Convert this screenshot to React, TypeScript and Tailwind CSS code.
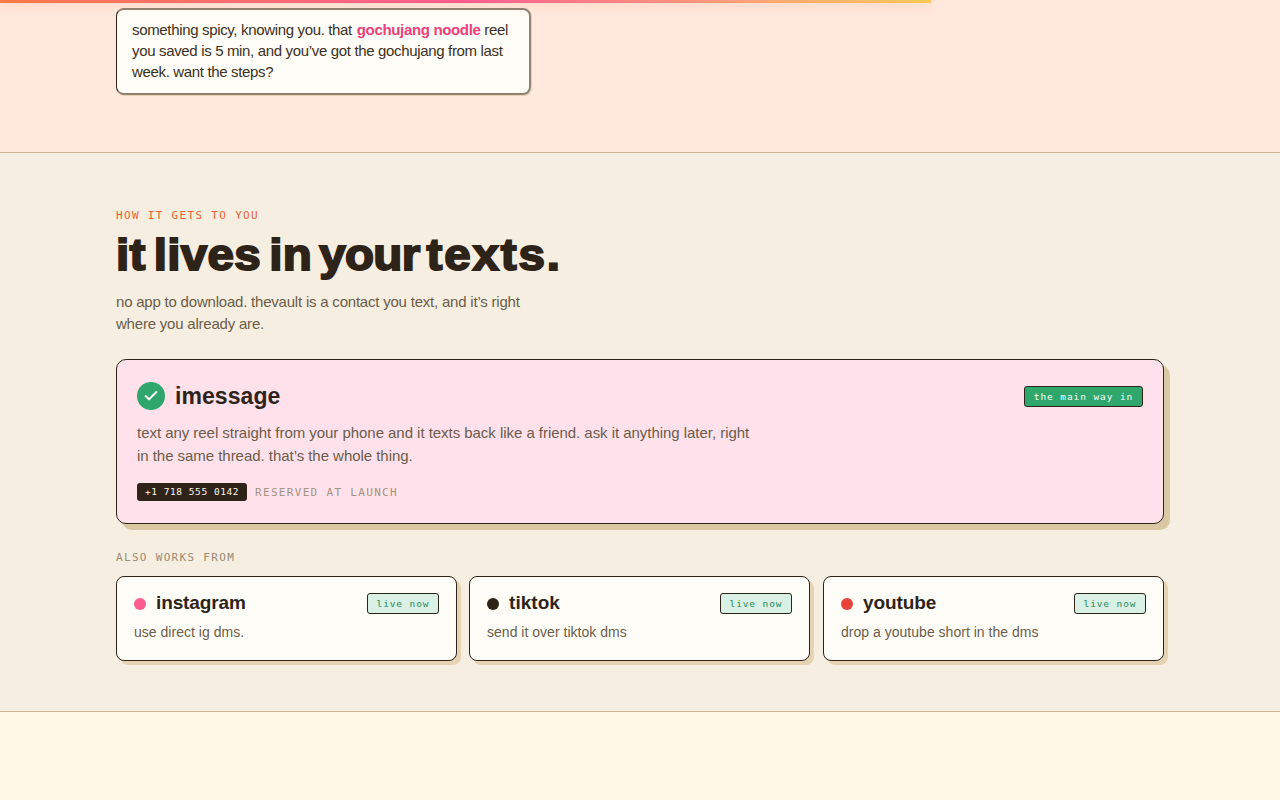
import { Check } from "lucide-react";

type Source = {
  name: string;
  note: string;
  dot: string;
  nameSpacing: string;
};

const SOURCES: Source[] = [
  {
    name: "instagram",
    note: "use direct ig dms.",
    dot: "bg-[#ff5c8f]",
    nameSpacing: "tracking-[-0.12px]",
  },
  {
    name: "tiktok",
    note: "send it over tiktok dms",
    dot: "bg-[#2e2318]",
    nameSpacing: "tracking-[0.05px]",
  },
  {
    name: "youtube",
    note: "drop a youtube short in the dms",
    dot: "bg-[#e8433a]",
    nameSpacing: "tracking-[-0.1px]",
  },
];

function SourceCard({ source }: { source: Source }) {
  return (
    <div className="h-[85px] w-[341px] rounded-lg border border-[#2e2318] bg-[#fffdf7] px-[17px] pt-4 shadow-[4px_4px_0_#e5d3b3]">
      <div className="flex h-[21px] items-center">
        <span className={`mr-2.5 mt-px h-3 w-3 rounded-full ${source.dot}`} />
        <h3 className={`-mt-0.5 text-[19px] font-bold leading-[21px] text-[#2e2318] ${source.nameSpacing}`}>
          {source.name}
        </h3>
        <span className="ml-auto flex h-[21px] w-[72px] items-center justify-center rounded-[3px] border border-[#2e2318] bg-[#d9f0e4] pt-px font-['DejaVu_Sans_Mono',monospace] text-[9.5px] tracking-[0.9px] text-[#2a8a5c]">
          live now
        </span>
      </div>
      <p className="mt-2 whitespace-nowrap text-[14px] leading-[21px] tracking-[0.02px] text-[#6b5d4a]">
        {source.note}
      </p>
    </div>
  );
}

export default function App() {
  return (
    <div className="flex h-[800px] w-[1280px] flex-col overflow-hidden bg-[#fff8e7] font-['Liberation_Sans',sans-serif] text-[#2e2318]">
      {/* Scroll progress */}
      <div className="absolute left-0 top-0 z-10 h-[3px] w-[931px] bg-linear-to-r from-[#ff7a45] via-[#ff5c8f] to-[#ffc857] shadow-[0_0_12px_rgba(255,122,69,0.4)]" />

      <section className="h-[153px] shrink-0 border-b border-[#cdb896] bg-[#ffe8dc] px-[116px] pt-2">
        <div className="h-[87px] w-[415px] rounded-lg border-2 border-l border-[#8f8273] border-l-[#2e2318] bg-[#fffdf7] px-[15px] pt-[9px] shadow-[1px_1px_0_#e5d3b3]">
          <p className="whitespace-nowrap text-[15px] leading-[21px] tracking-[-0.34px] text-[#3b3024]">
            something spicy, knowing you. that{" "}
            <b className="ml-px font-bold text-[#ec407a]">gochujang noodle</b> reel
            <br />
            you saved is 5 min, and you’ve got the gochujang from last
            <br />
            week. want the steps?
          </p>
        </div>
      </section>

      <section className="h-[559px] shrink-0 border-b border-[#cdb896] bg-[#f6eee0] px-[116px] pt-[55px]">
        <p className="font-['DejaVu_Sans_Mono',monospace] text-[11px] leading-4 tracking-[1.32px] text-[#ef6134]">
          HOW IT GETS TO YOU
        </p>
        <h2 className="mt-[5px] origin-left scale-x-[1.08] whitespace-nowrap text-[44px] font-bold leading-[52px] tracking-[0.3px] [-webkit-text-stroke:1.9px_#2e2318] [word-spacing:-5px]">
          it lives in <span className="-ml-px tracking-[-0.6px]">your</span>{" "}
          <span className="-ml-px tracking-[1.7px]">texts.</span>
        </h2>
        <p className="mt-2.5 whitespace-nowrap text-[15px] leading-[22px] tracking-[-0.21px] text-[#6b5d4a]">
          no app to download. thevault is a contact you text, and it’s right
          <br />
          where you already are.
        </p>

        <div className="mt-6 h-[165px] rounded-[10px] border border-[#2e2318] bg-[#ffe1eb] px-5 pt-[22px] shadow-[6px_6px_0_#dac7a3]">
          <div className="flex h-7 items-center">
            <span className="flex h-7 w-7 items-center justify-center rounded-full bg-[#2fa66c]">
              <Check className="h-4 w-4 text-white" strokeWidth={3} />
            </span>
            <h3 className="ml-2.5 text-[23px] font-bold leading-7 tracking-[0.08px]">imessage</h3>
            <span className="ml-auto flex h-[21px] w-[119px] items-center justify-center rounded-[3px] border border-[#2e2318] bg-[#2fa66c] pt-0.5 font-['DejaVu_Sans_Mono',monospace] text-[9.5px] tracking-[0.9px] text-[#f4fff8]">
              the main way in
            </span>
          </div>
          <p className="mt-[11px] whitespace-nowrap text-[15px] leading-[23px] tracking-[-0.04px] text-[#6b5d4a]">
            text any reel straight from your phone and it texts back like a friend. ask it anything later, right
            <br />
            in the same thread. that’s the whole thing.
          </p>
          <div className="mt-4 flex h-[18px] items-center gap-2 font-['DejaVu_Sans_Mono',monospace]">
            <span className="flex h-[18px] w-[110px] items-center justify-center rounded-[3px] bg-[#2e2318] text-[9.5px] tracking-[0.55px] text-[#fff8e7]">
              +1 718 555 0142
            </span>
            <span className="pt-0.5 text-[11px] tracking-[1.32px] text-[#a39480]">RESERVED AT LAUNCH</span>
          </div>
        </div>

        <p className="mt-[26px] font-['DejaVu_Sans_Mono',monospace] text-[11px] leading-4 tracking-[1.32px] text-[#9a8b74]">
          ALSO WORKS FROM
        </p>
        <div className="mt-2.5 grid grid-cols-[341px_342px_341px] gap-3">
          {SOURCES.map((source) => (
            <SourceCard key={source.name} source={source} />
          ))}
        </div>
      </section>
    </div>
  );
}
